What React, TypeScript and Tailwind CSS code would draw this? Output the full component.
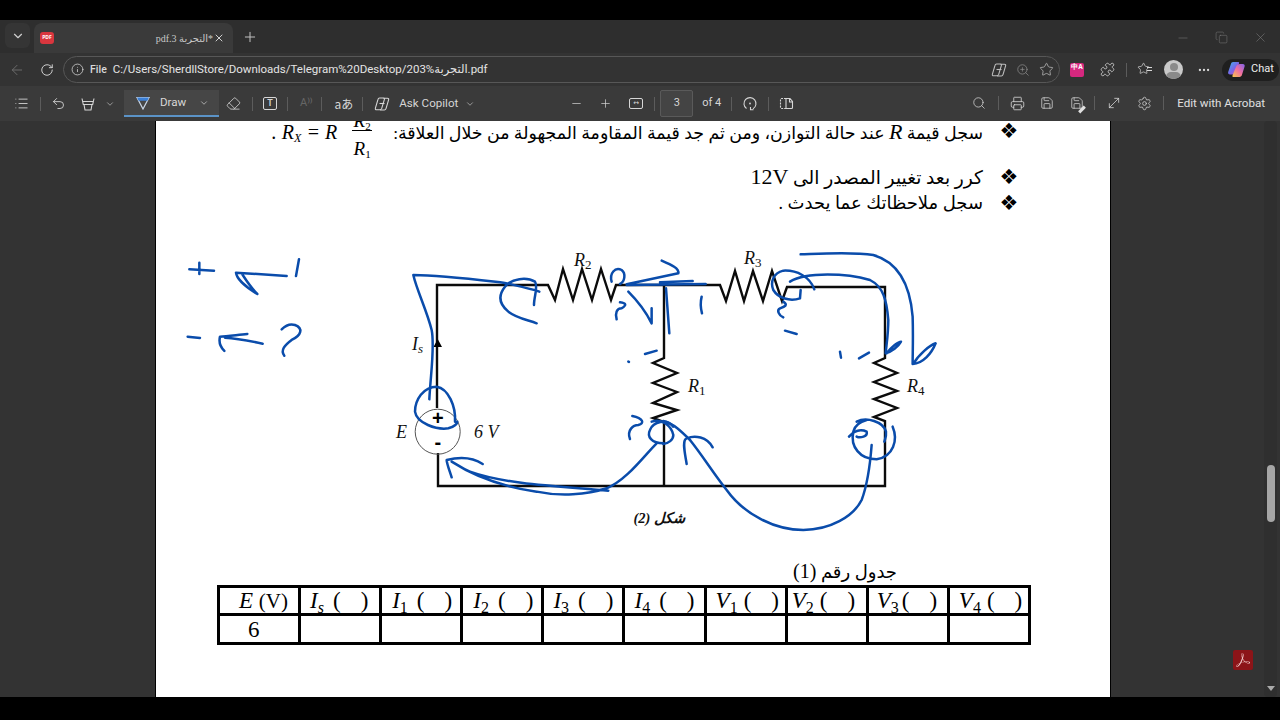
import {
  ArrowLeft,
  ChevronDown,
  Copy,
  Ellipsis,
  Eraser,
  Info,
  List,
  Minus,
  MoveDiagonal,
  Plus,
  Printer,
  Puzzle,
  RotateCw,
  Save,
  Search,
  Settings,
  Star,
  Undo2,
  X,
  ZoomIn,
} from "lucide-react";
import { SiAdobeacrobatreader } from "react-icons/si";

const ui = "font-['Roboto','DejaVu_Sans',sans-serif]";
const doc = "font-['Liberation_Serif','DejaVu_Serif',serif]";
const arabic = "font-['Liberation_Serif','DejaVu_Sans',serif]";

function Sep() {
  return <div className="w-px h-[14px] bg-[#5c5c5c] shrink-0" />;
}

function CopilotGlyph({ size = 16 }: { size?: number }) {
  return (
    <svg width={size} height={size} viewBox="0 0 16 16" fill="none" stroke="currentColor" strokeWidth="1.1" strokeLinejoin="round">
      <path d="M5.500 2h3.800c.9 0 1.400.6 1.100 1.400L7.700 12.400c-.3.9-.9 1.400-1.800 1.400H2.600c-1 0-1.500-.7-1.200-1.600L4 3.400C4.200 2.500 4.800 2 5.500 2z" />
      <path d="M9.500 2.200h3.900c1 0 1.500.7 1.200 1.600L12 12.600c-.3.900-.9 1.400-1.700 1.400H6" />
      <path d="M5.500 7.500h5" />
    </svg>
  );
}

function TabBar() {
  return (
    <div className="h-[33px] bg-[#2e2e2e] flex items-end pl-[5px] shrink-0">
      <div className="w-[25px] h-[25px] mb-[5px] rounded-md bg-[#353535] flex items-center justify-center text-[#cfcfcf]">
        <ChevronDown size={14} />
      </div>
      <div className="ml-[4px] w-[199px] h-[30px] rounded-t-lg bg-[#3a3a3a] flex items-center pl-[6px] pr-[8px]">
        <div className="w-[14px] h-[12px] rounded-[3px] bg-[#d9363e] flex items-center justify-center text-[5px] font-bold text-white">PDF</div>
        <span dir="rtl" className={"ml-auto text-[10px] text-[#c8c8c8] " + arabic}>*التجربة 3.pdf</span>
        <X size={12} className="text-[#d0d0d0]" />
      </div>
      <Plus size={16} strokeWidth={1.5} className="ml-[9px] mb-[8px] text-[#c0c0c0]" />
      <div className="ml-auto flex items-center gap-[22px] pr-[12px] mb-[8px] text-[#777]">
        <Minus size={14} strokeWidth={1} />
        <Copy size={13} strokeWidth={1} className="mx-[3px]" />
        <X size={15} strokeWidth={1} />
      </div>
    </div>
  );
}

function AddressBar() {
  return (
    <div className="h-[33px] bg-[#333333] flex items-center shrink-0 text-[#d8d8d8]">
      <ArrowLeft size={16} strokeWidth={1.4} className="ml-[9px] text-[#6e6e6e]" />
      <RotateCw size={14} strokeWidth={1.6} className="ml-[15px]" />
      <div className={"ml-[9px] w-[997px] h-[27px] rounded-[14px] border border-[#575757] flex items-center pl-[7px] pr-[5px] " + ui}>
        <Info size={13} strokeWidth={1.4} />
        <span className="ml-[6px] text-[10.5px] font-medium">File</span>
        <span className="ml-[6px] text-[11.5px] text-[#e4e4e4] whitespace-nowrap">C:/Users/SherdllStore/Downloads/Telegram%20Desktop/203%التجربة.pdf</span>
        <div className="ml-auto flex items-center gap-[9px] text-[#bdbdbd]">
          <CopilotGlyph />
          <ZoomIn size={14} strokeWidth={1.2} className="text-[#8f8f8f]" />
          <Star size={15} strokeWidth={1.2} />
        </div>
      </div>
      <div className="ml-[10px] w-[14px] h-[14px] rounded-[2px] bg-[#d6287f] text-[6.5px] leading-[7px] text-white text-center font-bold">中A</div>
      <Puzzle size={15} strokeWidth={1.3} className="ml-[16px]" />
      <div className="ml-[11px]"><Sep /></div>
      <div className="ml-[10px] relative w-[15px] h-[15px]">
        <Star size={13} strokeWidth={1.3} />
        <div className="absolute right-0 top-[5px] w-[5px] h-[1px] bg-[#d8d8d8]" />
        <div className="absolute right-0 top-[8px] w-[5px] h-[1px] bg-[#d8d8d8]" />
      </div>
      <div className="ml-[12px] w-[19px] h-[19px] rounded-full bg-[#c9c9c9] overflow-hidden flex flex-col items-center">
        <div className="mt-[3px] w-[8px] h-[8px] rounded-full bg-[#8a8a8a] shrink-0" />
        <div className="mt-[1px] w-[15px] h-[10px] rounded-full bg-[#8a8a8a] shrink-0" />
      </div>
      <Ellipsis size={14} className="ml-[14px]" />
      <div className={"ml-[11px] w-[57px] h-[22px] rounded-full bg-[#1f1f1f] flex items-center pl-[5px] gap-[5px] text-[11px] text-[#eee] " + ui}>
        <svg width="19" height="17" viewBox="0 0 19 17">
          <defs>
            <linearGradient id="cpa" x1="0" y1="0" x2="1" y2="1">
              <stop offset="0" stopColor="#3fb6ee" />
              <stop offset="0.55" stopColor="#7d62ea" />
              <stop offset="1" stopColor="#e0569a" />
            </linearGradient>
            <linearGradient id="cpb" x1="0" y1="1" x2="1" y2="0">
              <stop offset="0" stopColor="#f7c948" />
              <stop offset="0.5" stopColor="#f06ea0" />
              <stop offset="1" stopColor="#7d62ea" />
            </linearGradient>
          </defs>
          <path d="M6 1h5c1 0 1.400.7 1 1.600L8.600 12c-.4 1-1 1.500-2 1.500H3c-1.500 0-2.200-1-1.800-2.400L4 2.800C4.300 1.700 5 1 6 1z" fill="url(#cpa)" />
          <path d="M13 3h2.800c1.500 0 2.200 1 1.800 2.400L15 13.800c-.4 1.300-1.200 2.200-2.500 2.200H6.500c-1 0-1.300-.7-1-1.500L9 6c.5-2 2-3 4-3z" fill="url(#cpb)" />
        </svg>
        <span>Chat</span>
      </div>
    </div>
  );
}

function Toolbar() {
  return (
    <div className={"h-[35px] bg-[#3a3a3a] flex items-center shrink-0 text-[#d6d6d6] text-[11.6px] " + ui}>
      <List size={15} strokeWidth={1.4} className="ml-[14px]" />
      <div className="ml-[11px]"><Sep /></div>
      <Undo2 size={15} strokeWidth={1.4} className="ml-[10px]" />
      <svg width="14" height="14" viewBox="0 0 14 14" fill="none" stroke="currentColor" strokeWidth="1.1" className="ml-[15px]">
        <path d="M1 1.500l1.300 6h9.400l1.300-6M1.600 4.500h10.800M3 7.500l1 5.500h6l1-5.500" />
      </svg>
      <ChevronDown size={10} className="ml-[10px] text-[#aaa]" />
      <div className="ml-[9px] w-[95px] h-[27px] bg-[#464646] border-b-2 border-[#5b93c7] flex items-center pl-[12px]">
        <svg width="14" height="14" viewBox="0 0 14 14" fill="none">
          <path d="M1 1.500h12L7 13z" stroke="#c9d6e6" strokeWidth="1.2" />
          <path d="M1 1.500h12l-1.600 3.200H2.600z" fill="#3b7fd6" />
        </svg>
        <span className="ml-[10px]">Draw</span>
        <ChevronDown size={10} className="ml-[13px] text-[#bbb]" />
      </div>
      <Eraser size={15} strokeWidth={1.3} className="ml-[7px]" />
      <div className="ml-[11px]"><Sep /></div>
      <div className="ml-[10px] w-[14px] h-[13px] rounded-[2px] border border-[#d6d6d6] flex items-center justify-center text-[9px] leading-none font-semibold">T</div>
      <div className="ml-[10px]"><Sep /></div>
      <span className="ml-[12px] text-[11px] text-[#666]">A⁾⁾</span>
      <div className="ml-[8px]"><Sep /></div>
      <span className="ml-[13px] text-[12px] font-['Noto_Sans_CJK_JP',sans-serif]">aあ</span>
      <div className="ml-[9px]"><Sep /></div>
      <div className="ml-[11px]"><CopilotGlyph /></div>
      <span className="ml-[9px] whitespace-nowrap">Ask Copilot</span>
      <ChevronDown size={10} className="ml-[7px] text-[#aaa]" />
      <Minus size={13} strokeWidth={1.3} className="ml-[95px]" />
      <Plus size={13} strokeWidth={1.3} className="ml-[16px]" />
      <div className="ml-[17px] w-[14px] h-[11px] rounded-[2px] border border-[#d6d6d6] flex items-center justify-center text-[7px] leading-none">↔</div>
      <div className="ml-[11px]"><Sep /></div>
      <div className="ml-[5px] w-[33px] h-[27px] rounded-[2px] bg-[#444444] border border-[#5a5a5a] flex items-center justify-center text-[11px]">3</div>
      <span className="ml-[9px] text-[11px]">of 4</span>
      <div className="ml-[10px]"><Sep /></div>
      <svg width="14" height="15" viewBox="0 0 14 15" fill="none" stroke="currentColor" strokeWidth="1.1" className="ml-[11px]">
        <path d="M3.500 12.500A6 6 0 1 1 10 12.800M7.500 11v2.800H10.500" />
        <circle cx="7" cy="7.500" r="0.9" fill="currentColor" stroke="none" />
      </svg>
      <div className="ml-[11px]"><Sep /></div>
      <svg width="15" height="13" viewBox="0 0 15 13" fill="none" stroke="currentColor" strokeWidth="1.1" className="ml-[10px]">
        <path d="M7 1.500H2.500a1 1 0 0 0-1 1v8a1 1 0 0 0 1 1H7" strokeDasharray="2 1" />
        <path d="M7 1.500h4l2.500 3v6a1 1 0 0 1-1 1H7zM10.500 1.500v3.500h3" />
      </svg>
      <div className="ml-auto flex items-center">
        <Search size={14} strokeWidth={1.3} />
        <div className="ml-[12px]"><Sep /></div>
        <Printer size={15} strokeWidth={1.3} className="ml-[11px]" />
        <Save size={14} strokeWidth={1.3} className="ml-[15px]" />
        <div className="ml-[16px] relative">
          <Save size={14} strokeWidth={1.3} />
          <div className="absolute -right-[2px] -bottom-[1px] w-[8px] h-[3px] -rotate-45 bg-[#e0e0e0]" />
        </div>
        <div className="ml-[10px]"><Sep /></div>
        <MoveDiagonal size={16} strokeWidth={1.2} className="ml-[11px]" />
        <Settings size={15} strokeWidth={1.2} className="ml-[15px]" />
        <div className="ml-[11px]"><Sep /></div>
        <span className="ml-[13px] mr-[15px] text-[#e0e0e0] whitespace-nowrap">Edit with Acrobat</span>
      </div>
    </div>
  );
}

function Bullet() {
  return <span className="ml-[18px] w-[16px] flex justify-center text-[21px] leading-none font-['DejaVu_Sans',sans-serif] text-black">❖</span>;
}

function Instructions() {
  return (
    <div className={"text-black text-[18px] leading-none pr-[93px] " + arabic}>
      <div className="flex justify-end items-center h-[21px] relative">
        <span className={"italic mr-[15px] whitespace-nowrap text-[20px] " + doc}>
          . R<sub className="text-[12px]">X</sub> = R
        </span>
        <div className={"flex flex-col items-center w-[20px] mr-[21px] italic text-[19px] h-[21px] " + doc}>
          <span className="-mt-[10px] h-[22px] whitespace-nowrap">R<sub className="text-[11px] not-italic">2</sub></span>
          <div className="w-full h-px bg-black shrink-0" />
          <span className="mt-[8px] whitespace-nowrap">R<sub className="text-[11px] not-italic">1</sub></span>
        </div>
        <span dir="rtl" className="whitespace-nowrap text-[17.4px]">
          سجل قيمة <i className={"text-[22px] " + doc}>R</i> عند حالة التوازن، ومن ثم جد قيمة المقاومة المجهولة من خلال العلاقة:
        </span>
        <Bullet />
      </div>
      <div className="flex justify-end items-center h-[26px] mt-[22px]">
        <span dir="rtl" className="whitespace-nowrap text-[18.7px]">كرر بعد تغيير المصدر الى <span className={"text-[22px] " + doc}>12V</span></span>
        <Bullet />
      </div>
      <div className="flex justify-end items-center h-[26px]">
        <span dir="rtl" className="whitespace-nowrap">سجل ملاحظاتك عما يحدث .</span>
        <Bullet />
      </div>
    </div>
  );
}

function Circuit() {
  const wire = { fill: "none", stroke: "#0b0b0b", strokeWidth: 2.4, strokeLinejoin: "miter" as const };
  const ink = { fill: "none", stroke: "#0a4cab", strokeWidth: 7.5, strokeLinecap: "round" as const, strokeLinejoin: "round" as const };
  return (
    <svg viewBox="156 240 954 305" width="954" height="305" className={"block mt-[24px] " + doc}>
      <path {...wire} d="M437 408V285H548L555 300 563 269 573 300 582 269 592 300 601 269 611 300 616 285H720L726 301 735 271 744 301 753 271 763 301 772 271 782 301 787 287H885V358L874 363 897 373 874 382 897 391 874 399 897 408 874 417 885 421V486H438V453" />
      <path {...wire} d="M664 285V358L653 363 677 373 653 383 677 392 653 403 677 410 653 418 664 422V486" />
      <path d="M437.700 339L433.500 347H442z" fill="#000" />
      <circle cx="437.700" cy="431.700" r="22.500" fill="none" stroke="#555" strokeWidth="1" />
      <text x="432" y="425" fontSize="20" fill="#000" fontFamily="Liberation Sans" fontWeight="bold">+</text>
      <text x="434.500" y="449" fontSize="20" fill="#000" fontFamily="Liberation Sans" fontWeight="bold">-</text>
      <g fontStyle="italic" fontSize="18" fill="#111">
        <text x="574" y="266">R<tspan fontSize="13" dy="3" fontStyle="normal">2</tspan></text>
        <text x="744" y="264">R<tspan fontSize="13" dy="3" fontStyle="normal">3</tspan></text>
        <text x="688" y="392">R<tspan fontSize="13" dy="3" fontStyle="normal">1</tspan></text>
        <text x="907" y="392">R<tspan fontSize="13" dy="3" fontStyle="normal">4</tspan></text>
        <text x="412" y="350">I<tspan fontSize="13" dy="3">s</tspan></text>
        <text x="396" y="438">E</text>
        <text x="474" y="438">6 V</text>
      </g>
      <text x="685" y="523" textAnchor="start" direction="rtl" fontSize="14.500" fontWeight="bold" fontStyle="italic" fill="#111">شكل (2)</text>

      {/* handwriting, traced in 3x crop coords */}
      <g transform="translate(380 240) scale(0.3333)" {...ink}>
        <path d="M148 478C152 400 165 320 155 270C140 210 110 150 100 105C180 105 300 120 370 128C400 135 450 145 478 155M462 195C462 170 475 140 465 125C440 110 395 115 375 140C355 165 355 190 385 215C410 235 445 240 470 250" />
        <path d="M225 545C228 500 205 445 170 440C130 440 105 480 105 515C110 550 170 570 205 565C225 560 232 550 232 545" />
        <path d="M830 610C790 650 740 720 680 745C620 765 540 770 470 755C400 745 300 720 215 665M685 752C560 740 380 735 270 695M215 712C208 690 200 670 200 660C240 650 275 650 308 672" />
        <path d="M695 125C688 100 705 80 725 90C738 100 735 125 720 132" />
        <path d="M745 155C770 180 800 220 815 250L815 205M710 238C705 220 710 205 725 205C740 195 740 190 720 187" />
        <path d="M745 365L747 366M750 597C740 570 760 555 775 555C795 550 790 535 757 528" />
        <path d="M850 610C815 610 800 590 810 570C820 545 860 535 880 560" />
      </g>
      <g transform="translate(640 240) scale(0.3333)" {...ink}>
        <path d="M-40 133L115 100C118 85 95 75 65 62M60 127L158 123M-40 135L197 132" />
        <path d="M78 145L88 280M15 342L50 332M185 170C180 190 182 205 186 220" />
        <path d="M35 545C70 535 95 560 100 585C100 600 85 610 70 612M70 543C100 550 125 575 150 600M140 672C135 640 125 600 140 595C165 585 200 590 218 622" />
        <path d="M150 600C190 650 220 700 260 750C310 820 400 870 490 870C570 870 640 830 665 780C680 740 690 680 695 615" />
        <path d="M523 148C510 110 470 90 430 92C400 100 390 125 400 150C415 175 450 185 480 175L482 150M430 232C415 225 410 210 420 205C435 200 445 195 430 185M435 272L470 282" />
        <path d="M450 125C500 95 620 100 690 120C730 140 740 180 745 240C745 280 740 310 737 340C755 335 775 320 783 305C775 305 755 320 740 340" />
        <path d="M482 43C560 40 640 35 700 45C770 65 810 130 818 230C820 290 818 340 818 372C850 370 875 340 887 310C870 315 835 345 820 372" />
        <path d="M600 335L603 353M657 355L687 338" />
        <path d="M627 590C640 575 660 565 680 575C685 590 660 595 650 590M650 545C680 530 730 545 738 575C740 590 735 600 733 605M758 560C775 600 760 650 710 658C660 658 630 620 640 575C645 555 660 545 680 540" />
      </g>
      <g transform="translate(170 240) scale(0.3333)" {...ink}>
        <path d="M58 88L132 92M88 68L88 102" />
        <path d="M350 108L198 98C200 115 225 140 262 162C240 140 225 115 215 100M387 58L378 108" />
        <path d="M53 290L90 294M232 282C200 285 170 290 150 290C145 310 155 325 163 333M165 293C200 295 250 305 278 311" />
        <path d="M343 347C330 330 345 315 365 300C395 285 400 265 375 255C360 250 345 258 335 268" />
      </g>
    </svg>
  );
}

// letter, subscript, cell padding, gap before "("
const heads: [string, string, string, string][] = [
  ["I", "s", "pl-[9px]", "ml-[9px]"],
  ["I", "1", "pl-[10px]", "ml-[9px]"],
  ["I", "2", "pl-[10px]", "ml-[9px]"],
  ["I", "3", "pl-[9px]", "ml-[9px]"],
  ["I", "4", "pl-[9px]", "ml-[9px]"],
  ["V", "1", "pl-[9px]", "ml-[6px]"],
  ["V", "2", "pl-[4px]", "ml-[6px]"],
  ["V", "3", "pl-[8px]", "ml-[3px]"],
  ["V", "4", "pl-[9px]", "ml-[6px]"],
];

function ResultsTable() {
  return (
    <div className={"mx-[61px] " + doc}>
      <div dir="rtl" className={"text-[18px] leading-[25px] text-black pr-[152px] mt-[14px] " + arabic}>
        جدول رقم <span className={"text-[20px] " + doc}>(1)</span>
      </div>
      <table className="w-[814px] table-fixed border-collapse border-[3px] border-black text-black text-[23px] leading-none">
        <tbody>
          <tr className="h-[28px]">
            <td className="border-[3px] border-black pl-[19px] whitespace-nowrap">
              <i>E</i> <span className="text-[21px]">(V)</span>
            </td>
            {heads.map(([a, b, pad, before], i) => (
              <td key={i} className={"border-[3px] border-black whitespace-nowrap " + pad}>
                <div className="flex items-baseline">
                  <i>{a}</i>
                  <sub className={"text-[16px] bottom-[-5px] " + (b === "s" ? "italic" : "not-italic")}>{b}</sub>
                  <span className={before}>(</span>
                  <span className="ml-[20px]">)</span>
                </div>
              </td>
            ))}
          </tr>
          <tr className="h-[29px]">
            <td className="border-[3px] border-black pl-[28px]">6</td>
            {heads.map((_, i) => (
              <td key={i} className="border-[3px] border-black" />
            ))}
          </tr>
        </tbody>
      </table>
    </div>
  );
}

export default function App() {
  return (
    <div className="w-[1280px] h-[720px] overflow-hidden bg-black flex flex-col pt-[20px] pb-[23px]">
      <TabBar />
      <AddressBar />
      <Toolbar />
      <div className="flex-1 min-h-0 flex bg-[#333333] relative">
        <div className="w-[155px] shrink-0" />
        <div className="w-[956px] shrink-0 bg-white border-x border-black overflow-hidden">
          <Instructions />
          <Circuit />
          <ResultsTable />
        </div>
        <div className="flex-1 flex justify-end">
          <div className="w-[13px] mr-[3px] bg-[#2f2f2f] rounded-sm flex flex-col items-center relative">
            <div className="mt-[344px] w-[8px] h-[57px] rounded bg-[#a6a6a6]" />
            <div className="mt-auto mb-[6px] w-0 h-0 border-x-[4px] border-t-[5px] border-x-transparent border-t-[#aaa]" />
          </div>
        </div>
        <div className="absolute left-[1233px] top-[529px] w-[20px] h-[20px] rounded-[2px] bg-[#8c1418] flex items-center justify-center text-[#f2c9c9]">
          <SiAdobeacrobatreader size={14} />
        </div>
      </div>
    </div>
  );
}
